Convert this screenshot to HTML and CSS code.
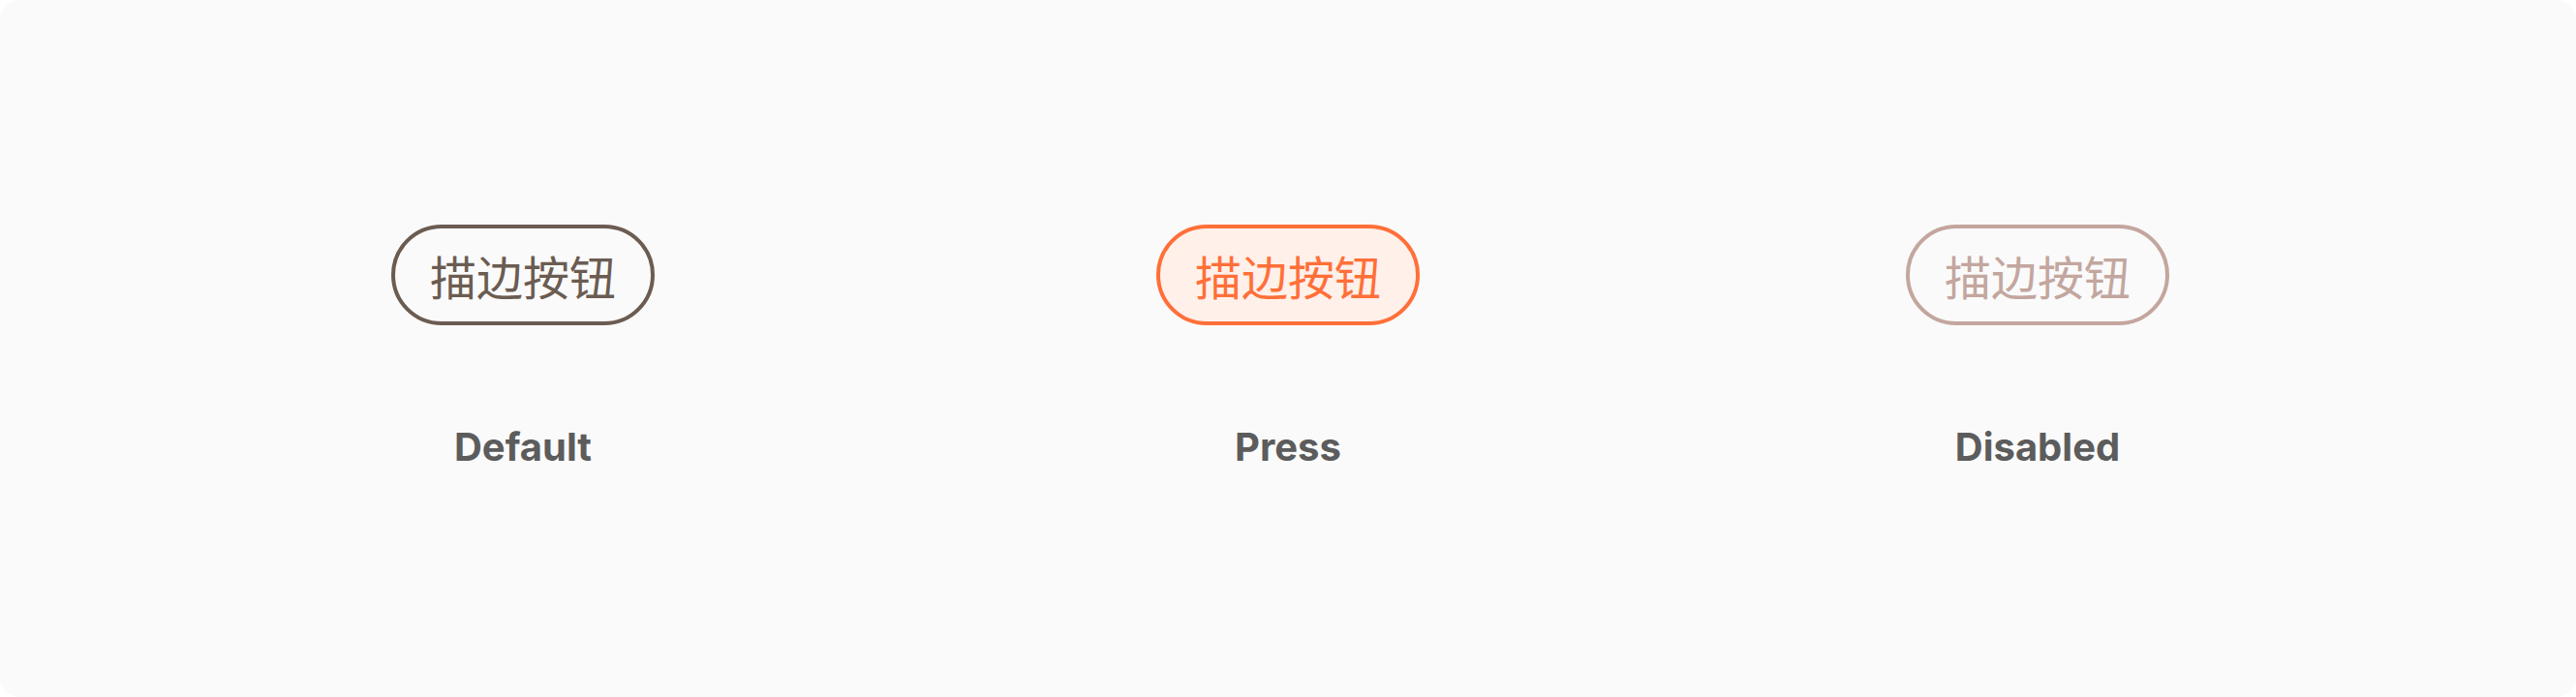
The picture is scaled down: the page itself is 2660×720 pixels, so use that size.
FILE: index.html
```html
<!DOCTYPE html>
<html lang="zh-CN">
<head>
<meta charset="utf-8">
<title>描边按钮</title>
<link rel="stylesheet" href="styles.css">
</head>
<body>
<main class="card">
  <section class="variant variant-default">
    <button class="btn btn-default" type="button">描边按钮</button>
    <p class="label">Default</p>
  </section>
  <section class="variant variant-press">
    <button class="btn btn-press" type="button">描边按钮</button>
    <p class="label">Press</p>
  </section>
  <section class="variant variant-disabled">
    <button class="btn btn-disabled" type="button" disabled>描边按钮</button>
    <p class="label">Disabled</p>
  </section>
</main>
</body>
</html>
```

FILE: styles.css
```css
html, body {
  margin: 0;
  padding: 0;
  background: #ffffff;
}

.card {
  box-sizing: border-box;
  width: 2660px;
  height: 720px;
  background: #fafafa;
  border-radius: 20px;
  display: grid;
  grid-template-columns: 1080px 500px 1048px;
  align-items: start;
  padding-top: 232px;
}

.variant {
  display: flex;
  flex-direction: column;
  align-items: center;
  gap: 102px;
}

.btn {
  box-sizing: border-box;
  width: 272px;
  height: 104px;
  border-radius: 52px;
  border: 4px solid #6b5c52;
  background: transparent;
  color: #6b5c52;
  font-family: "Noto Sans CJK SC", "Noto Sans", sans-serif;
  font-size: 48px;
  font-weight: 400;
  line-height: 1.5;
  padding: 0;
  display: flex;
  align-items: center;
  justify-content: center;
}

.btn-press {
  border-color: #ff6f38;
  color: #ff6f38;
  background: #fff0ea;
}

.btn-disabled {
  border-color: #c3a69e;
  color: #c3a69e;
}

.label {
  margin: 0;
  font-family: Inter, "Liberation Sans", sans-serif;
  font-weight: 700;
  font-size: 40px;
  line-height: 48px;
  color: #5c5c5c;
}
```
